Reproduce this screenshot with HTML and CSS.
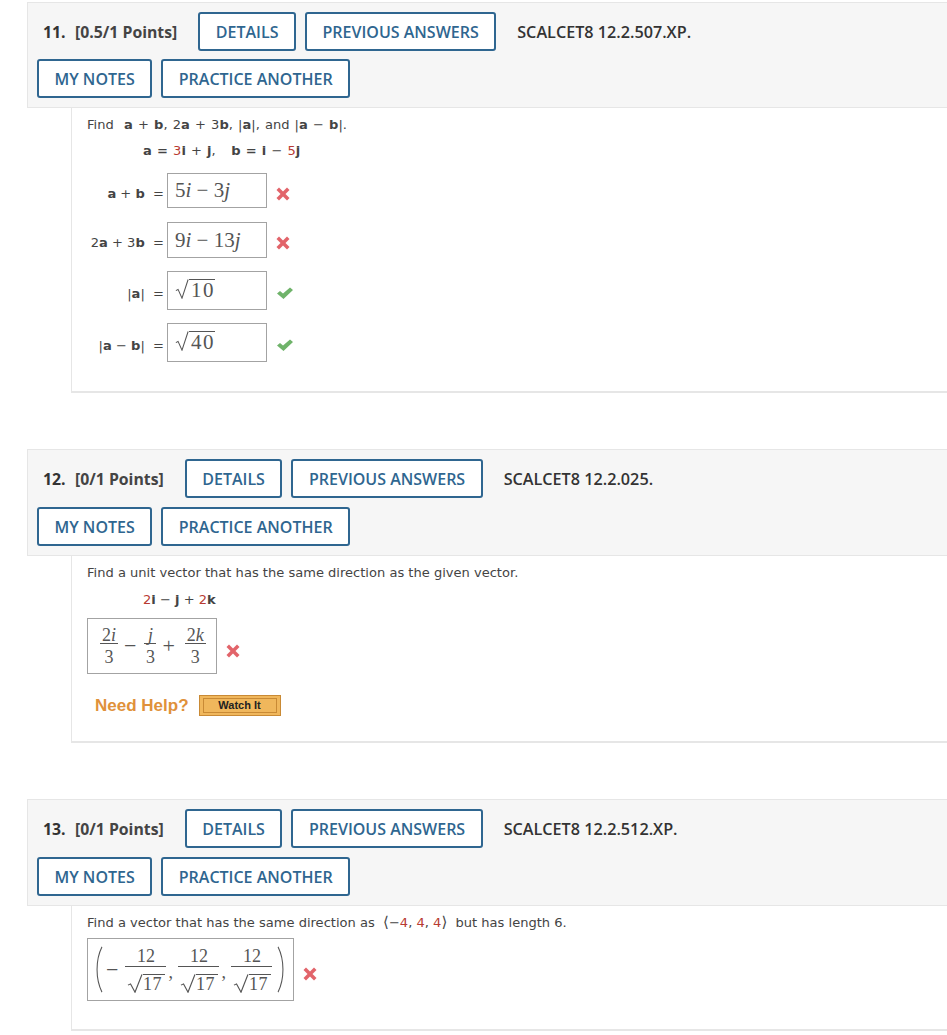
FILE: index.html
```html
<!DOCTYPE html>
<html lang="en">
<head>
  <meta charset="UTF-8" />
  <title>Homework</title>
  <link rel="stylesheet" href="styles.css">
</head>
<body>
  <svg class="defs" width="0" height="0">
    <symbol id="cross" viewBox="0 0 14 14"><path d="M.5 3 3 .5 7 4.5 11 .5 13.5 3 9.500 7 13.500 11 11 13.500 7 9.500 3 13.500 .5 11 4.500 7Z"/></symbol>
    <symbol id="check" viewBox="0 0 16 12"><path d="M0 6.500 3 4 6 6.500 13 .5 16 3 6.500 12Z"/></symbol>
  </svg>

  <section class="question q11">
    <div class="head">
      <div class="head-row">
        <span class="num">11.</span><span class="points">[0.5/1 Points]</span>
        <button class="first">DETAILS</button>
        <button>PREVIOUS ANSWERS</button>
        <span class="code">SCALCET8 12.2.507.XP.</span>
      </div>
      <div class="head-row">
        <button>MY NOTES</button>
        <button>PRACTICE ANOTHER</button>
      </div>
    </div>
    <div class="body">
      <p class="prompt spaced">Find &nbsp;<b>a</b> + <b>b</b>, 2<b>a</b> + 3<b>b</b>, |<b>a</b>|, and |<b>a</b> &minus; <b>b</b>|.</p>
      <p class="given spaced"><b>a</b> <b>=</b> <span class="red">3</span><b>i</b> + <b>j</b>, &nbsp;&nbsp;<b>b</b> <b>=</b> <b>i</b> &minus; <span class="red">5</span><b>j</b></p>
      <div class="answers">
        <div class="answer">
          <span class="label"><b>a</b> + <b>b</b> &nbsp;=</span>
          <span class="box h35"><span class="math"><span>5<i>i</i> &minus; 3<i>j</i></span></span></span>
          <svg class="mark cross"><use href="#cross"/></svg>
        </div>
        <div class="answer">
          <span class="label">2<b>a</b> + 3<b>b</b> &nbsp;=</span>
          <span class="box h36"><span class="math"><span>9<i>i</i> &minus; 13<i>j</i></span></span></span>
          <svg class="mark cross"><use href="#cross"/></svg>
        </div>
        <div class="answer">
          <span class="label">|<b>a</b>| &nbsp;=</span>
          <span class="box h39"><span class="math"><span class="root"><svg class="surd" viewBox="0 0 16 24" preserveAspectRatio="none"><path d="M1 14 3.500 12.500 8 23 15 .6" fill="none"/></svg><span class="rad">10</span></span></span></span>
          <svg class="mark check"><use href="#check"/></svg>
        </div>
        <div class="answer">
          <span class="label">|<b>a</b> &minus; <b>b</b>| &nbsp;=</span>
          <span class="box h39"><span class="math"><span class="root"><svg class="surd" viewBox="0 0 16 24" preserveAspectRatio="none"><path d="M1 14 3.500 12.500 8 23 15 .6" fill="none"/></svg><span class="rad">40</span></span></span></span>
          <svg class="mark check"><use href="#check"/></svg>
        </div>
      </div>
    </div>
  </section>

  <section class="question q12">
    <div class="head">
      <div class="head-row">
        <span class="num">12.</span><span class="points">[0/1 Points]</span>
        <button class="first">DETAILS</button>
        <button>PREVIOUS ANSWERS</button>
        <span class="code">SCALCET8 12.2.025.</span>
      </div>
      <div class="head-row">
        <button>MY NOTES</button>
        <button>PRACTICE ANOTHER</button>
      </div>
    </div>
    <div class="body">
      <p class="prompt">Find a unit vector that has the same direction as the given vector.</p>
      <p class="given"><span class="red">2</span><b>i</b> &minus; <b>j</b> + <span class="red">2</span><b>k</b></p>
      <div class="answer wide">
        <span class="box expr">
          <span class="frac"><span class="top">2<i>i</i></span><span class="bot">3</span></span>
          <span class="op">&minus;</span>
          <span class="frac"><span class="top"><i>j</i></span><span class="bot">3</span></span>
          <span class="op tight">+</span>
          <span class="frac"><span class="top">2<i>k</i></span><span class="bot">3</span></span>
        </span>
        <svg class="mark cross"><use href="#cross"/></svg>
      </div>
      <div class="help">
        <span class="need">Need Help?</span>
        <span class="watch"><span>Watch It</span></span>
      </div>
    </div>
  </section>

  <section class="question q13">
    <div class="head">
      <div class="head-row">
        <span class="num">13.</span><span class="points">[0/1 Points]</span>
        <button class="first">DETAILS</button>
        <button>PREVIOUS ANSWERS</button>
        <span class="code">SCALCET8 12.2.512.XP.</span>
      </div>
      <div class="head-row">
        <button>MY NOTES</button>
        <button>PRACTICE ANOTHER</button>
      </div>
    </div>
    <div class="body">
      <p class="prompt">Find a vector that has the same direction as &nbsp;<span class="angle">&#10216;</span>&minus;<span class="red">4</span>, <span class="red">4</span>, <span class="red">4</span><span class="angle">&#10217;</span>&nbsp; but has length 6.</p>
      <div class="answer vec">
        <span class="box expr long">
          <svg class="paren open" viewBox="0 0 10 50" preserveAspectRatio="none"><path d="M8.500 1C2.500 10 1.500 18 1.500 25S2.500 40 8.500 49" fill="none"/></svg>
          <span class="op first-op">&minus;</span>
          <span class="frac"><span class="top">12</span><span class="bot"><span class="root small"><svg class="surd" viewBox="0 0 16 24" preserveAspectRatio="none"><path d="M1 14 3.500 12.500 8 23 15 .6" fill="none"/></svg><span class="rad">17</span></span></span></span><span class="comma">,</span>
          <span class="frac"><span class="top">12</span><span class="bot"><span class="root small"><svg class="surd" viewBox="0 0 16 24" preserveAspectRatio="none"><path d="M1 14 3.500 12.500 8 23 15 .6" fill="none"/></svg><span class="rad">17</span></span></span></span><span class="comma">,</span>
          <span class="frac"><span class="top">12</span><span class="bot"><span class="root small"><svg class="surd" viewBox="0 0 16 24" preserveAspectRatio="none"><path d="M1 14 3.500 12.500 8 23 15 .6" fill="none"/></svg><span class="rad">17</span></span></span></span>
          <svg class="paren close" viewBox="0 0 10 50" preserveAspectRatio="none"><path d="M1.500 1C7.500 10 8.500 18 8.500 25S7.500 40 1.500 49" fill="none"/></svg>
        </span>
        <svg class="mark cross"><use href="#cross"/></svg>
      </div>
    </div>
  </section>
</body>
</html>
```

FILE: styles.css
```css
body {
  margin: 0;
  background: #fff;
  color: #444;
  font-family: "DejaVu Sans", sans-serif;
  font-size: 13.05px;
  overflow-x: hidden;
}
.defs {
  position: absolute;
}
.question {
  margin-left: 27px;
}
.q11 {
  padding-top: 2px;
}
.q12,
.q13 {
  margin-top: 56px;
}
.head {
  height: 107px;
  box-sizing: border-box;
  padding: 9px 0 0 9px;
  background: #f6f6f6;
  border: 1px solid #e6e6e6;
  border-right: none;
  font-family: "Open Sans", sans-serif;
}
.q11 .head {
  height: 106px;
}
.head-row {
  display: flex;
  align-items: center;
  height: 39px;
  margin-bottom: 9px;
}
.q11 .head-row {
  margin-bottom: 8px;
}
button {
  height: 39px;
  padding: 0 15.5px;
  margin-right: 9px;
  background: #fff;
  border: 2px solid #2f6690;
  border-radius: 3px;
  color: #2f6690;
  font-family: "Open Sans", sans-serif;
  font-size: 16px;
  font-weight: 600;
}
.num {
  width: 32px;
  margin-left: 6px;
  color: #333;
  font-size: 15.8px;
  font-weight: 700;
}
.points {
  color: #444;
  font-size: 15.8px;
  font-weight: 700;
}
button.first {
  margin-left: 21px;
}
.code {
  margin-left: 12px;
  color: #333;
  font-size: 16.2px;
  font-weight: 600;
}
.body {
  margin-left: 44px;
  border-left: 1px solid #e6e6e6;
  border-bottom: 2px solid #e6e6e6;
  padding-left: 15px;
}
.q11 .body {
  height: 283px;
}
.q12 .body {
  height: 185px;
}
.q13 .body {
  height: 123px;
}
p {
  margin: 0;
}
.prompt {
  padding-top: 9px;
  line-height: 16px;
}
.q13 .prompt {
  padding-top: 8px;
}
.spaced {
  word-spacing: 1px;
}
.given {
  margin-top: 10px;
  padding-left: 56px;
  line-height: 16px;
}
.q12 .given {
  margin-top: 11px;
}
.red {
  color: #b83a32;
}
.angle {
  font-family: "DejaVu Sans", sans-serif;
  font-size: 15px;
}
.answers {
  margin-top: 14px;
  display: flex;
  flex-direction: column;
  gap: 13px;
}
.answer {
  display: flex;
  align-items: center;
}
.label {
  width: 77px;
  margin-right: 3px;
  padding-top: 5px;
  text-align: right;
  white-space: nowrap;
}
.box {
  display: flex;
  align-items: center;
  box-sizing: border-box;
  border: 1px solid #a3a3a3;
  background: #fff;
  color: #555;
  font-family: "Liberation Serif", serif;
  font-size: 21px;
}
.h35 {
  width: 100px;
  height: 35px;
  margin-bottom: 1px;
}
.h36 {
  width: 100px;
  height: 36px;
}
.h39 {
  width: 100px;
  height: 39px;
}
.math {
  padding-left: 7px;
  white-space: nowrap;
}
.h39 .math {
  padding-top: 2px;
}
.mark {
  width: 14px;
  height: 14px;
  margin-left: 9px;
}
.cross {
  margin-top: 6px;
  fill: #e2646a;
}
.check {
  width: 16px;
  height: 12px;
  margin-top: 4px;
  margin-left: 10px;
  fill: #6fb36a;
}
.root {
  display: inline-flex;
  align-items: flex-start;
}
.surd {
  width: 14px;
  height: 20px;
  stroke: #555;
  stroke-width: 1.2;
}
.rad {
  border-top: 1px solid #555;
  padding: 0 0 0 2px;
  line-height: 20px;
  letter-spacing: 1.5px;
}
.wide {
  margin-top: 10px;
}
.wide .cross {
  margin-top: 10px;
}
.expr {
  height: 56px;
  width: 130px;
  padding-left: 12px;
  font-size: 18px;
}
.frac {
  display: inline-flex;
  flex-direction: column;
  align-items: center;
}
.top {
  padding: 5px 2px 0;
  border-bottom: 1px solid #555;
  line-height: 16px;
  align-self: stretch;
  text-align: center;
  min-width: 8px;
}
.bot {
  line-height: 26px;
}
.op {
  margin: 0 8px 0 6px;
  font-size: 22px;
}
.op.tight {
  margin: 0 10px 0 6px;
}
.help {
  display: flex;
  align-items: center;
  margin-top: 21px;
  padding-left: 8px;
}
.need {
  color: #e0913a;
  font-family: "Liberation Sans", sans-serif;
  font-size: 17px;
  font-weight: 700;
}
.watch {
  margin-left: 10px;
  width: 82px;
  height: 21px;
  box-sizing: border-box;
  padding: 2px 3px;
  background: #f0b75c;
  border: 1px solid #c98a35;
  display: flex;
}
.watch span {
  flex: 1;
  border: 1px solid #c98a35;
  color: #222;
  font-family: "Liberation Sans", sans-serif;
  font-size: 11px;
  font-weight: 700;
  line-height: 13px;
  text-align: center;
}
.vec {
  margin-top: 7px;
}
.vec .cross {
  margin-top: 8px;
  margin-left: 9px;
}
.long {
  height: 63px;
  width: 207px;
  padding-left: 8px;
}
.long .frac {
  width: 41px;
}
.long .top {
  padding: 0;
  line-height: 19px;
  box-sizing: border-box;
}
.paren {
  width: 7px;
  height: 47px;
  stroke: #555;
  stroke-width: 1.5;
}
.paren.close {
  margin-left: 5px;
}
.first-op {
  margin: 0 7px 0 3px;
}
.small {
  margin-top: 7px;
}
.small .surd {
  width: 16px;
  height: 19px;
}
.small .rad {
  padding: 0 3px 0 0;
  line-height: 18px;
  letter-spacing: 0.5px;
}
.long .bot {
  line-height: 0;
  height: 26px;
}
.comma {
  width: 12px;
  margin-top: 6px;
  padding-left: 2px;
  box-sizing: border-box;
}
```
